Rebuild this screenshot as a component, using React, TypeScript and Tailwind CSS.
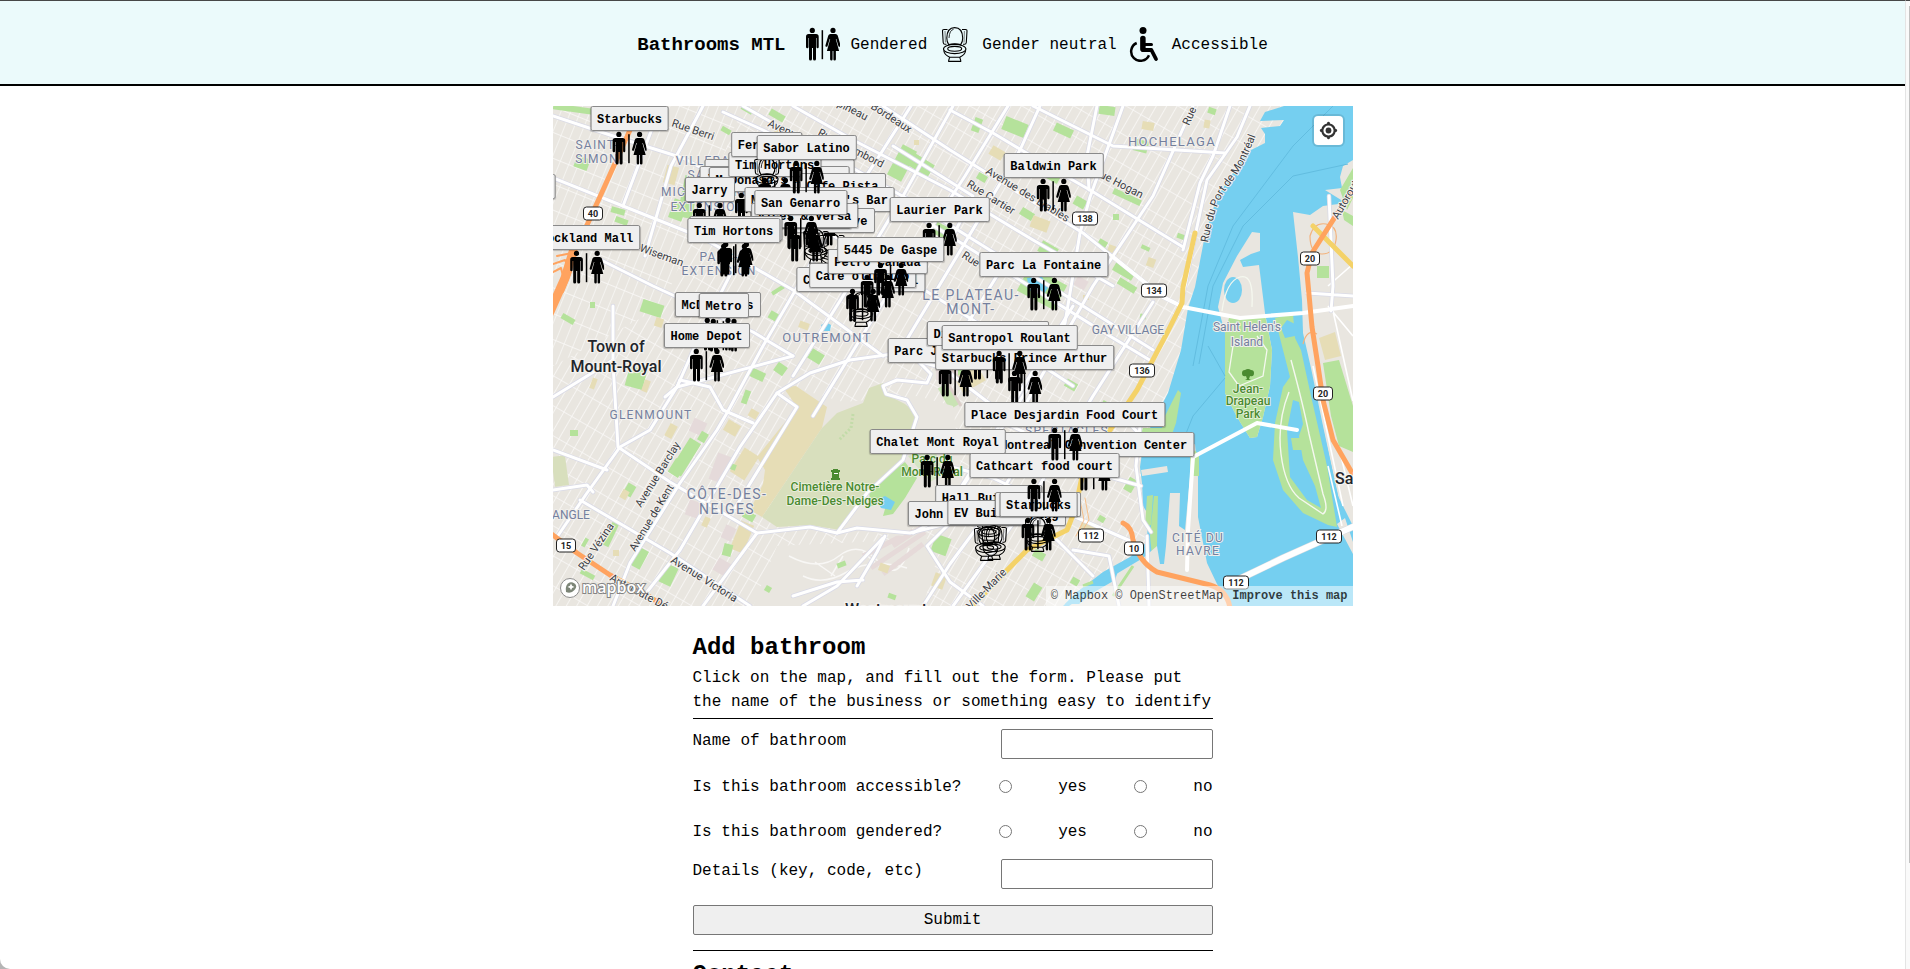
import React, { useState } from "react";

type Kind = "gendered" | "neutral";

// x is the centre of the pin, y is the top of its label
type Bathroom = { name: string; x: number; y: number; kind: Kind };

const bathrooms: Bathroom[] = [
  { name: "Starbucks", x: 77, y: 0, kind: "gendered" },
  { name: "Marche Central", x: -54, y: 68, kind: "gendered" },
  { name: "Rockland Mall", x: 34, y: 119, kind: "gendered" },
  { name: "Casa Italia Gardens", x: 227, y: 53, kind: "neutral" },
  { name: "Jean-Talon Market 1", x: 222, y: 60, kind: "neutral" },
  { name: "McDonald's", x: 199, y: 61, kind: "gendered" },
  { name: "Tim Hortons", x: 222, y: 46, kind: "gendered" },
  { name: "Ferreira", x: 214, y: 26, kind: "neutral" },
  { name: "Cafe Pista", x: 290, y: 67, kind: "gendered" },
  { name: "Miss Villeray's Bar", x: 267, y: 81, kind: "gendered" },
  { name: "Cafe Olive", x: 279, y: 102, kind: "neutral" },
  { name: "Dispatch", x: 263, y: 98, kind: "neutral" },
  { name: "Jarry", x: 157, y: 71, kind: "gendered" },
  { name: "Vices & Versa", x: 252, y: 97, kind: "gendered" },
  { name: "San Genarro", x: 248, y: 84, kind: "gendered" },
  { name: "Sabor Latino", x: 254, y: 29, kind: "gendered" },
  { name: "Tim Hortons", x: 183, y: 110, kind: "gendered" },
  { name: "Tim Hortons", x: 181, y: 112, kind: "gendered" },
  { name: "McDonald's", x: 165, y: 186, kind: "gendered" },
  { name: "Metro", x: 171, y: 187, kind: "gendered" },
  { name: "Home Depot", x: 154, y: 217, kind: "gendered" },
  { name: "Laurier Park", x: 387, y: 91, kind: "gendered" },
  { name: "Cafe Club Social", x: 308, y: 161, kind: "neutral" },
  { name: "Cafe olimpico", x: 310, y: 157, kind: "gendered" },
  { name: "Petro Canada", x: 325, y: 143, kind: "gendered" },
  { name: "5445 De Gaspe", x: 338, y: 131, kind: "gendered" },
  { name: "Baldwin Park", x: 501, y: 47, kind: "gendered" },
  { name: "Parc La Fontaine", x: 491, y: 146, kind: "gendered" },
  { name: "Parc Jeanne-Mance", x: 403, y: 232, kind: "gendered" },
  { name: "Dieu du Ciel QG", x: 435, y: 215, kind: "gendered" },
  { name: "Starbucks Prince Arthur", x: 472, y: 239, kind: "gendered" },
  { name: "Santropol Roulant", x: 457, y: 219, kind: "gendered" },
  { name: "Montreal Convention Center", x: 541, y: 326, kind: "gendered" },
  { name: "Chalet Mont Royal", x: 385, y: 323, kind: "gendered" },
  { name: "Hall Building", x: 436, y: 379, kind: "neutral" },
  { name: "John Molson Building", x: 434, y: 395, kind: "neutral" },
  { name: "EV Building", x: 441, y: 394, kind: "neutral" },
  { name: "Second Cup", x: 485, y: 386, kind: "neutral" },
  { name: "Starbucks", x: 486, y: 386, kind: "gendered" },
  { name: "Cathcart food court", x: 492, y: 347, kind: "gendered" },
  { name: "Place Desjardin Food Court", x: 512, y: 296, kind: "gendered" },
];

const GREEN = "#b5e29b";
const SAND = "#e6ddb6";
const PINK = "#e5dada";
const WATER = "#75cff0";

// x, y, width, height, rotation, fill
const patches: [number, number, number, number, number, string][] = [
  [22, 51, 14, 12, 20, GREEN],
  [0, 0, 40, 6, 8, GREEN],
  [58, 102, 14, 6, 15, GREEN],
  [62, 112, 13, 6, 20, GREEN],
  [112, 60, 12, 18, 15, SAND],
  [128, 70, 15, 42, 12, GREEN],
  [118, 94, 14, 20, 20, GREEN],
  [168, 22, 10, 5, 30, GREEN],
  [216, 6, 16, 7, 30, GREEN],
  [188, 1, 12, 5, 30, GREEN],
  [222, 22, 8, 6, 30, SAND],
  [282, 40, 16, 10, 30, GREEN],
  [341, 40, 16, 34, 28, GREEN],
  [356, 52, 24, 14, 32, GREEN],
  [361, 34, 5, 5, 0, SAND],
  [376, 118, 22, 12, 28, GREEN],
  [420, 12, 8, 14, 20, GREEN],
  [450, 14, 24, 14, 22, GREEN],
  [501, 20, 19, 9, 25, GREEN],
  [546, 0, 16, 9, 8, GREEN],
  [655, 2, 8, 6, 20, GREEN],
  [651, 14, 6, 8, 10, SAND],
  [589, 16, 12, 8, 10, SAND],
  [581, 34, 14, 12, 15, GREEN],
  [437, 42, 14, 10, 30, SAND],
  [424, 68, 10, 7, 30, GREEN],
  [493, 66, 14, 9, 30, GREEN],
  [521, 92, 12, 9, 30, GREEN],
  [559, 88, 30, 6, 25, GREEN],
  [467, 104, 14, 8, 32, GREEN],
  [478, 112, 18, 12, 20, SAND],
  [560, 108, 6, 6, 0, GREEN],
  [545, 134, 9, 7, 30, GREEN],
  [555, 140, 11, 7, 20, SAND],
  [588, 140, 9, 4, 25, GREEN],
  [594, 152, 8, 9, 20, SAND],
  [624, 128, 8, 5, 20, GREEN],
  [486, 138, 18, 12, 30, GREEN],
  [560, 160, 22, 10, 30, GREEN],
  [564, 176, 20, 7, 32, GREEN],
  [468, 168, 42, 28, 28, GREEN],
  [522, 172, 12, 10, 30, PINK],
  [587, 208, 6, 5, 10, GREEN],
  [530, 189, 6, 5, 0, SAND],
  [8, 210, 14, 6, 30, GREEN],
  [37, 196, 5, 6, 0, GREEN],
  [88, 196, 22, 13, 18, GREEN],
  [102, 212, 8, 9, 18, SAND],
  [218, 182, 14, 4, -32, GREEN],
  [216, 206, 9, 8, 30, GREEN],
  [246, 216, 10, 7, 20, SAND],
  [274, 172, 16, 8, 28, GREEN],
  [74, 262, 18, 20, 15, GREEN],
  [90, 274, 6, 12, 20, SAND],
  [38, 272, 5, 11, 20, SAND],
  [17, 324, 8, 6, 0, GREEN],
  [0, 350, 14, 30, -8, "#d8dfbd"],
  [114, 318, 8, 14, 28, SAND],
  [138, 314, 14, 14, 25, PINK],
  [146, 326, 8, 10, 30, GREEN],
  [172, 316, 14, 12, 30, SAND],
  [126, 332, 13, 38, 32, GREEN],
  [118, 354, 12, 16, 32, GREEN],
  [72, 378, 9, 12, 30, GREEN],
  [68, 384, 7, 9, 30, SAND],
  [160, 348, 14, 28, 20, PINK],
  [183, 344, 17, 28, 32, SAND],
  [177, 358, 6, 6, 20, GREEN],
  [134, 395, 13, 16, 20, PINK],
  [150, 411, 6, 10, 25, SAND],
  [190, 406, 12, 8, 30, GREEN],
  [170, 420, 11, 14, 25, PINK],
  [182, 416, 14, 30, 22, SAND],
  [170, 438, 9, 12, 15, GREEN],
  [162, 454, 14, 14, 30, PINK],
  [54, 416, 7, 25, 25, GREEN],
  [30, 432, 4, 9, 30, GREEN],
  [80, 442, 12, 20, 28, GREEN],
  [60, 444, 6, 6, 0, SAND],
  [27, 466, 15, 5, 28, GREEN],
  [109, 459, 13, 20, 25, GREEN],
  [284, 456, 9, 5, -20, GREEN],
  [212, 480, 6, 6, 30, GREEN],
  [335, 488, 8, 5, 20, GREEN],
  [196, 264, 16, 9, 25, GREEN],
  [222, 258, 11, 10, 35, GREEN],
  [190, 284, 6, 14, 20, GREEN],
  [196, 304, 9, 8, 30, SAND],
  [252, 296, 12, 6, -20, GREEN],
  [242, 306, 6, 9, 30, GREEN],
  [256, 245, 14, 11, 32, GREEN],
  [326, 458, 10, 8, 20, SAND],
  [380, 430, 16, 18, 20, GREEN],
  [380, 468, 12, 14, 20, SAND],
  [400, 262, 26, 12, 35, GREEN],
  [383, 260, 22, 14, 0, PINK],
  [390, 278, 12, 24, -30, "#c9e3b4"],
  [404, 264, 26, 18, -30, SAND],
  [512, 275, 12, 8, 30, GREEN],
  [548, 296, 10, 8, 30, GREEN],
  [540, 250, 8, 5, 20, PINK],
  [480, 445, 12, 8, 30, GREEN],
  [526, 417, 16, 14, 22, SAND],
  [545, 410, 7, 6, 30, GREEN],
  [573, 372, 9, 14, 30, GREEN],
  [476, 478, 10, 16, 32, GREEN],
  [518, 472, 8, 7, 30, GREEN],
];

const majorRoads = [
  "M60 200 L60 257 L65 341 L117 376 L204 427 L257 421 L284 427 L304 422 L357 427 L397 417",
  "M4 431 L34 387 L67 341 L97 324 L124 281 L150 222 L196 132",
  "M60 500 L77 457 L127 377 L164 324 L174 307 L210 240 L274 130 L330 44 L358 0",
  "M90 491 L127 444 L187 341 L224 287 L257 267 L297 254 L340 248 L390 262 L440 300",
  "M150 500 L204 427",
  "M182 402 L244 301 L224 287",
  "M27 394 L117 447 L197 500",
  "M0 384 L34 379 L40 386",
  "M0 344 L54 364",
  "M0 291 L60 254",
  "M127 274 L157 281 L170 304 L200 317",
  "M112 291 L124 281 L127 274",
  "M124 281 L240 250",
  "M284 427 L314 387 L350 354 L364 311 L354 294 L333 288 L330 280 L344 274 L374 277 L378 268 L367 257",
  "M0 10 L60 30 L130 52 L190 84 L300 140 L420 214 L520 280",
  "M0 72 L70 100 L150 132 L240 184 L330 250",
  "M48 154 L100 180 L200 226 L240 250",
  "M170 6 L210 24 L300 70 L397 130 L470 176 L560 232 L600 256",
  "M100 20 L70 100 M150 0 L118 60 L92 150",
  "M190 0 L260 40 L360 96 L440 146 L530 200 L600 244",
  "M240 0 L300 34 L397 84 L480 134 L560 180",
  "M330 0 L397 44 L530 127 L610 191 L630 201",
  "M397 4 L440 27 L497 61 L537 84 L630 141",
  "M480 0 L560 40 L672 47",
  "M697 0 L684 31 L654 74 L644 121 L630 190",
  "M677 0 L660 50 L647 77 L630 144",
  "M570 0 L537 91 L527 127 L512 217 L470 290 L410 380",
  "M544 0 L534 50 L536 84",
  "M640 0 L600 90 L540 180 L500 250 L460 320",
  "M487 0 L467 44 L410 140 L350 240",
  "M455 0 L412 70 L330 196 L260 310",
  "M400 0 L350 90 L290 190 L240 270",
  "M450 160 L397 246 M600 196 L540 290 L480 390 L400 500",
  "M395 360 L440 372 L520 410 L589 440",
  "M417 300 L500 340 L560 372 L588 380",
  "M360 427 L390 410 L440 330 L520 200",
  "M370 500 L397 458 L440 400 L500 300",
  "M397 417 L374 440 L397 476 L430 500",
  "M250 500 L284 480 L330 432",
  "M304 480 L324 446 L332 430 M240 490 L284 476 L310 474",
  "M520 444 L556 450 L566 500 M594 430 L596 500 M500 430 L540 470",
  "M587 320 L583 360 L590 414 L598 426",
  "M560 300 L588 330",
  "M340 40 L420 90 L400 130",
  "M754 187 L800 190 M776 90 L780 180 L778 205",
];

const bridges = [
  "M560 151 L610 191 L630 201 L687 212 L750 207 L800 200",
  "M634 464 L635 424 L640 351 L704 317 L744 324",
];

const orangeRoads = [
  "M84 0 L77 24 L50 84 L35 117 L22 144 L10 174 L-4 206",
  "M-4 426 L24 447 L57 469 L97 491 L114 502",
  "M800 84 L780 114 L759 147 L754 167 L759 221 L765 260 L770 294 L780 334 L802 372",
  "M570 417 Q579 421 580 434 Q586 456 604 466 L657 479 Q674 484 677 502",
];

const yellowRoads = [
  "M642 127 L630 181 L629 197 L614 227 L584 284 L557 324 L530 366 L522 404 L514 424 L494 434 L474 444 L417 502",
  "M760 120 L800 160",
];

const shields: [string, number, number][] = [
  ["40", 40, 107],
  ["138", 532, 112],
  ["134", 601, 184],
  ["20", 757, 152],
  ["136", 589, 264],
  ["20", 770, 287],
  ["112", 538, 429],
  ["10", 581, 442],
  ["112", 776, 430],
  ["112", 683, 476],
  ["15", 13, 439],
];

// text, x, y, rotation
const streets: [string, number, number, number][] = [
  ["Rue Berri", 118, 20, 19],
  ["Avenue", 214, 20, 24],
  ["Rue Chambord", 264, 29, 27],
  ["Papineau", 272, -6, 27],
  ["Bordeaux", 317, 2, 33],
  ["Wiseman", 86, 145, 20],
  ["Rue Hogan", 540, 68, 27],
  ["Avenue des Érables", 432, 67, 31],
  ["Rue Cartier", 413, 80, 32],
  ["Rue", 408, 151, 33],
  ["Rue", 636, 20, -66],
  ["Autoroute", 785, 114, -60],
  ["Avenue Barclay", 88, 402, -58],
  ["Avenue de Kent", 82, 446, -59],
  ["Avenue Victoria", 117, 456, 32],
  ["Rue Vézina", 31, 465, -56],
  ["Autoroute Dé", 56, 474, 28],
  ["Ville-Marie", 418, 504, -46],
];

function GenderedIcon() {
  return (
    <svg width="35" height="35" viewBox="0 0 35 35" className="shrink-0" aria-hidden="true">
      <circle cx="7.3" cy="3.4" r="2.6" />
      <path d="M3.6 7H11q2.7 0 2.7 2.7V20q0 1.3-1.1 1.3T11.5 20v-9H11v21q0 1.5-1.5 1.5T8 32V21H7v11q0 1.5-1.5 1.5T4 32V11h-.5v9q0 1.3-1.2 1.3T1 20V9.7Q1 7 3.6 7z" />
      <rect x="16.6" y="3.2" width="1.5" height="29" />
      <circle cx="28" cy="3.4" r="2.6" />
      <path d="M25.5 7h5q1.8 0 2.3 1.7l2.7 9.6q.3 1.2-.7 1.5t-1.4-.8L31.3 12h-.5l3.3 12h-3.2v8.2q0 1.3-1.3 1.3t-1.2-1.3V24h-.8v8.2q0 1.3-1.2 1.3t-1.3-1.3V24h-3.2l3.3-12h-.5L22.6 19q-.4 1.1-1.4.8t-.7-1.5l2.7-9.6Q23.7 7 25.5 7z" />
    </svg>
  );
}

function ToiletIcon() {
  return (
    <svg
      width="35"
      height="35"
      viewBox="0 0 35 35"
      fill="none"
      stroke="black"
      strokeWidth="1.1"
      className="shrink-0"
      aria-hidden="true"
    >
      <path d="M10.5 2.5H7Q5.4 2.5 5.5 4l.7 11.5q.2 1.8 1.8 1.8h1.5M25 2.5h3.5q1.6 0 1.5 1.5l-.7 11.5q-.2 1.8-1.8 1.8H26" />
      <path d="M8 4l.4 11.5M27.4 4L27 15.5" strokeWidth="0.5" />
      <path d="M9.8 11Q10 .6 17.7.6T25.7 11q0 4-2 6.6Q17.7 16 11.7 17.6 9.8 15 9.8 11z" />
      <path d="M12 11Q12.5 3 16.5 2.4" strokeWidth="0.8" />
      <ellipse cx="17.7" cy="22" rx="11.2" ry="4.6" />
      <ellipse cx="17.7" cy="21.8" rx="7" ry="2.4" />
      <path d="M6.7 23.5q.8 4.5 6 6.7h10q5.2-2.200 6-6.7" />
      <path d="M12.7 30.2l-1 3.2v1h12v-1l-1-3.200" />
    </svg>
  );
}

function AccessibleIcon() {
  return (
    <svg
      width="35"
      height="35"
      viewBox="0 0 35 35"
      fill="none"
      stroke="black"
      strokeLinecap="round"
      strokeLinejoin="round"
      className="shrink-0"
      aria-hidden="true"
    >
      <circle cx="16" cy="3.5" r="3.5" fill="black" stroke="none" />
      <path d="M15.9 11.500V22" strokeWidth="5.5" />
      <path d="M16 17.5H24.500" strokeWidth="3" />
      <path d="M15.700 23H24.400L29 32" strokeWidth="3.8" />
      <path d="M9.7 16A9.3 9.3 0 1 0 22 28.2" strokeWidth="2.5" strokeLinecap="butt" />
    </svg>
  );
}

function MapCanvas() {
  return (
    <svg
      viewBox="0 0 800 500"
      preserveAspectRatio="xMidYMid slice"
      className="block h-full w-full font-[Roboto,sans-serif]"
      aria-hidden="true"
    >
      <defs>
        <pattern id="grid" width="26" height="9" patternUnits="userSpaceOnUse" patternTransform="rotate(-60)">
          <path d="M0 0H26M0 0V9" stroke="#fbfaf9" strokeWidth="1.4" fill="none" />
        </pattern>
        <pattern id="gridWest" width="9" height="24" patternUnits="userSpaceOnUse" patternTransform="rotate(22)">
          <path d="M0 0H9M0 0V24" stroke="#fbfaf9" strokeWidth="1.3" fill="none" />
        </pattern>
        <path id="portRoad" d="M655 137 Q662 95 676 80 Q692 60 704 26" />
      </defs>

      <rect width="800" height="500" fill="#e9e6e0" />
      <rect width="800" height="500" fill="url(#grid)" />
      <path d="M0 0H190L110 200L0 260z" fill="#e9e6e0" />
      <path d="M0 0H190L110 200L0 260z" fill="url(#gridWest)" />
      <path d="M224 440L390 432L370 500H200z" fill="#e9e6e0" />
      <path
        d="M236 450q30 16 50 0t40 6 30-14M250 470q20 10 44-4t60-4M262 456l20 14M290 450l-12 20M310 446l16 14"
        stroke="#f8f7f5"
        strokeWidth="1.5"
        fill="none"
      />
      <path d="M310 450l50-26M318 462l54-36M330 468l40-30M340 440l30-20" stroke="#e6dad9" strokeWidth="5" fill="none" />

      {patches.map(([x, y, w, h, r, fill], i) => (
        <rect
          key={i}
          x={x}
          y={y}
          width={w}
          height={h}
          fill={fill}
          transform={`rotate(${r} ${x + w / 2} ${y + h / 2})`}
        />
      ))}

      {/* the mountain */}
      <path d="M230 281L250 284L290 296L364 290L400 300L410 380L350 430L290 424L269 330z" fill="#e9e6e0" />
      <path d="M230 281L243 280L274 301L269 322L209 411L197 404L210 378L212 364L204 351L244 301z" fill={SAND} />
      <path
        d="M310 297L316 282L330 277L336 290L352 298L362 307L361 322L350 354L327 374L310 391L287 424L257 419L224 421L209 411L269 322L284 307z"
        fill="#d8dfbd"
      />
      <path d="M316 386L338 366L352 356L364 372L352 392L340 408L330 410L334 396L318 400z" fill={GREEN} />
      <path d="M355 350l26-8 10 26-14 8z" fill="#d5e6c4" />
      <path d="M324 394l8-4 10 6-4 8-10-2z" fill={WATER} />
      <path d="M268 219l5-3 5 3-1 6-7 0z" fill={WATER} />
      <path d="M300 308l-2 14-12 12" stroke="#c2dba8" strokeWidth="3" strokeDasharray="2 2" fill="none" />
      <path d="M388 266l20 34M396 262l10 10" stroke="#dccfca" strokeWidth="3" fill="none" />
      <path d="M474 172l14-2 8 10-6 10-14-6z" fill={WATER} />

      {/* the river */}
      <path
        d="M731 0L712 6L707 15L731 14L727 20L708 22L712 28V37L694 46L664 91L652 129L642 181L635 202L628 244L615 287L597 322L590 340L587 361L589 377L590 400L595 408L594 436L577 451L550 466L524 486L510 500H800V0z"
        fill={WATER}
      />
      <path d="M617 300l8-16 3 3-5 30-5 14-9-1v-14z" fill={GREEN} />
      <path d="M590 322h28l-2 6h-28z" fill={GREEN} />
      <path d="M588 364l26-4 1 6-26 4z" fill="#e9e6e0" />
      <path d="M594 390l6-1-2 30-6 2zM601 390h4l-1 50-5 10-2-20z" fill={GREEN} />
      <path
        d="M617 387H627L626 420L632 424L637 371V340L642 338L645 371V411L654 457L664 478L678 500H516L560 470L590 452L604 440L607 458L611 458L613 440z"
        fill="#e9e6e0"
      />
      <path d="M637 352l5-8 4 6v20h-8z" fill={GREEN} />
      <path d="M524 486l16-10 26-14-4 12-24 14-12 10h-14z" fill={WATER} />
      <path d="M540 476l-10 4M560 490l20-30" stroke={GREEN} strokeWidth="3" />

      {/* Saint Helen's island */}
      <path
        d="M699 126L707 127V145L698 148L687 154L690 161L706 159L712 207L719 244L717 280L710 311L704 331L697 332L684 311L672 287V227L665 201L670 177L684 150z"
        fill="#e9e6e0"
      />
      <path d="M676 212L712 209L719 244L717 280L710 311L704 331L697 332L684 311L672 287V227z" fill={GREEN} />
      <ellipse cx="680" cy="184" rx="9" ry="13" fill={WATER} />
      <path d="M669 205q4-30 18-34t12 30M680 240l-4 26 10 14 24-10 4-26-10-14" stroke="#f5f8ef" strokeWidth="1.3" fill="none" />

      {/* Notre-Dame island */}
      <path
        d="M722 212L740 208L742 232L748 244L758 290L774 360L784 421L775 419L750 407L730 384L720 354L722 317L730 281L737 271L730 244z"
        fill={GREEN}
      />
      <path
        d="M740 294L734 324L737 371L754 394L768 402L762 380L750 354L746 330L750 318L746 296zM728 222l6-8 8 4v12l-10 2z"
        fill={WATER}
      />
      <path d="M738 332h12v12h-10z" fill={GREEN} />
      <path
        d="M736 286q-12 30-8 62t18 44l24 16q6-4 0-20l-14-60q-6-30-18-74"
        stroke="#f5f8ef"
        strokeWidth="1.4"
        fill="none"
      />

      {/* south shore */}
      <path
        d="M800 54L790 60L787 71L789 82L772 84L793 97L770 100L757 109L740 106L745 151L749 194L750 227L758 262L770 320L785 390L800 420z"
        fill="#e9e6e0"
      />
      <path d="M742 208l6-2 2 28 42 186-5-2z" fill={WATER} />
      <path d="M770 257L786 254L800 300V346L786 340L778 310z" fill={GREEN} />
      <path d="M787 84l13-22v30l-6 12zM764 160h12v12h-12zM789 104l11 6v10l-9-6z" fill={GREEN} />
      <path d="M766 232l16-6 6 24-16 4z" fill={SAND} />
      <path d="M784 418l8-6 8 24v12z" fill="#e9e6e0" />
      <path
        d="M775 360l14 60M760 260l30 140M788 350l12 50M775 180l25-22M775 200l25 30M780 205l20 90"
        stroke="#fff"
        strokeWidth="1.6"
        fill="none"
      />
      <path
        d="M757 130q4-14 16-12t10 16-14 14-12-18zM750 238q4-16 14-10"
        stroke="#f3b27c"
        strokeWidth="1.2"
        fill="none"
      />
      <path
        d="M780 0L740 40L680 120L655 180L640 260M795 58L740 70L690 120L660 180L646 258M672 272L640 310L632 330M672 270L655 240"
        stroke="#62bde0"
        strokeWidth="1"
        fill="none"
      />

      <g fill="none" strokeLinejoin="round" strokeLinecap="round">
        {majorRoads.map((d, i) => (
          <path key={i} d={d} stroke="#d9dae6" strokeWidth="4.5" />
        ))}
        {majorRoads.map((d, i) => (
          <path key={i} d={d} stroke="#fff" strokeWidth="3" />
        ))}
        {bridges.map((d, i) => (
          <path key={i} d={d} stroke="#fff" strokeWidth="4" />
        ))}
        <path d="M804 419L730 452L676 478" stroke="#d8dbe0" strokeWidth="7" />
        <path d="M804 419L730 452L676 478" stroke="#fff" strokeWidth="6" />
        {yellowRoads.map((d, i) => (
          <path key={i} d={d} stroke="#f4d268" strokeWidth="5" />
        ))}
        {orangeRoads.map((d, i) => (
          <path key={i} d={d} stroke="#ffa35f" strokeWidth="5" />
        ))}
        <path d="M20 146L12 172L-4 208" stroke="#ffa35f" strokeWidth="9" />
        <path d="M0 158l12-4 6 12-8 20M0 166l8-4 4 16M4 150l20-4" stroke="#ffa35f" strokeWidth="2" />
        <path d="M527 394l4 20-8 16M532 392l4 22-10 16" stroke="#f6c08c" strokeWidth="1" />
      </g>

      <g fill="#74809e" textAnchor="middle" stroke="#f1efeb" strokeWidth="2" paintOrder="stroke">
        <g className="text-[12px] tracking-widest">
          <text x="44" y="43">SAINT-</text>
          <text x="44" y="57">SIMON</text>
          <text x="156" y="59">VILLERAY-</text>
          <text x="156" y="73">SAINT-</text>
          <text x="155" y="90">MICHEL-PARC-</text>
          <text x="155" y="105">EXTENSION</text>
          <text x="166" y="155">PARC-</text>
          <text x="166" y="169">EXTENSION</text>
          <text x="514" y="329">SPECTACLES</text>
          <text x="645" y="436">CITÉ DU</text>
          <text x="645" y="449">HAVRE</text>
          <text x="98" y="313">GLENMOUNT</text>
        </g>
        <g className="text-[13px] tracking-widest">
          <text x="274" y="236">OUTREMONT</text>
          <text x="619" y="40">HOCHELAGA</text>
        </g>
        <g className="text-[14px] tracking-widest">
          <text x="418" y="194">LE PLATEAU-</text>
          <text x="418" y="208">MONT-</text>
          <text x="174" y="393">CÔTE-DES-</text>
          <text x="174" y="408">NEIGES</text>
        </g>
        <g className="text-[12px]">
          <text x="575" y="228">GAY VILLAGE</text>
          <text x="694" y="225">Saint Helen's</text>
          <text x="694" y="240">Island</text>
          <text x="18" y="413">ANGLE</text>
        </g>
      </g>

      <g className="text-[12px] font-medium" fill="#4a8a30" textAnchor="middle" stroke="#eef3e3" strokeWidth="1.5" paintOrder="stroke">
        <text x="282" y="385">Cimetière Notre-</text>
        <text x="282" y="399">Dame-Des-Neiges</text>
        <text x="379" y="357">Parc du</text>
        <text x="379" y="370">Mont-Royal</text>
        <text x="695" y="287">Jean-</text>
        <text x="695" y="299">Drapeau</text>
        <text x="695" y="312">Park</text>
      </g>
      <path d="M279 366h-1v-2h2v-1h5v1h2v2h-1v6h1v2h-9v-2h1z" fill="#4a8a30" />
      <path d="M281 367h4v1h-4z" fill="#fff" />
      <path d="M689 267q0-3 3-3 3-2 6 0 3 0 3 3 0 4-4 3l-1 3 2 1h-6l2-1-1-3q-4 1-4-3z" fill="#4a8a30" />

      <g className="text-[16px] font-medium" fill="#22252b" stroke="#f4f2ef" strokeWidth="2.5" paintOrder="stroke">
        <text x="63" y="246" textAnchor="middle">Town of</text>
        <text x="63" y="266" textAnchor="middle">Mount-Royal</text>
        <text x="782" y="378">Saint-Lambert</text>
        <text x="292" y="509">Westmount</text>
      </g>

      <g className="text-[11px]" fill="#3b3d44" stroke="#f4f2ef" strokeWidth="2" paintOrder="stroke">
        {streets.map(([name, x, y, r]) => (
          <text key={`${name}-${x}`} x={x} y={y} transform={`rotate(${r} ${x} ${y})`}>
            {name}
          </text>
        ))}
        <text>
          <textPath href="#portRoad">Rue du Port de Montréal</textPath>
        </text>
      </g>

      {shields.map(([num, x, y]) => {
        const w = num.length === 3 ? 25 : 19;
        return (
          <g key={`${num}-${x}`}>
            <rect x={x - w / 2} y={y - 6} width={w} height="13" rx="3" fill="#fff" stroke="#222" />
            <text x={x} y={y + 4} textAnchor="middle" className="text-[9px] font-bold" fill="#222">
              {num}
            </text>
          </g>
        );
      })}
    </svg>
  );
}

function MapMarker({ bathroom }: { bathroom: Bathroom }) {
  return (
    <div
      className="absolute flex -translate-x-1/2 flex-col items-center"
      style={{ left: bathroom.x, top: bathroom.y }}
    >
      <button
        type="button"
        className="h-[25px] rounded-[2px] border border-[#8a8a8a] bg-[#efefef] px-[6px] pt-[2px] text-[12px] leading-[20px] font-bold whitespace-nowrap shadow-[0_1px_1px_rgba(0,0,0,0.2)]"
      >
        {bathroom.name}
      </button>
      {bathroom.kind === "gendered" ? <GenderedIcon /> : <ToiletIcon />}
    </div>
  );
}

function BathroomMap() {
  return (
    <section aria-label="Map of bathrooms" className="relative h-[500px] w-full max-w-[800px] overflow-hidden">
      <MapCanvas />
      {bathrooms.map((b, i) => (
        <MapMarker key={i} bathroom={b} />
      ))}

      <button
        type="button"
        aria-label="Find my location"
        className="absolute top-[10px] right-[10px] h-[29px] w-[29px] rounded bg-white shadow-[0_0_0_2px_rgba(0,0,0,0.1)]"
      >
        <svg width="29" height="29" viewBox="0 0 20 20" fill="#333">
          <path d="M10 4C9 4 9 5 9 5v.1A5 5 0 0 0 5.1 9H5s-1 0-1 1 1 1 1 1h.1A5 5 0 0 0 9 14.9v.1s0 1 1 1 1-1 1-1v-.1a5 5 0 0 0 3.9-3.9h.1s1 0 1-1-1-1-1-1h-.1A5 5 0 0 0 11 5.1V5s0-1-1-1zm0 2.5a3.5 3.5 0 1 1 0 7 3.5 3.5 0 1 1 0-7z" />
          <circle cx="10" cy="10" r="2" />
        </svg>
      </button>

      <a href="#mapbox" aria-label="Mapbox homepage" className="absolute bottom-[6px] left-[6px]">
        <svg width="90" height="24" viewBox="0 0 90 24">
          <circle cx="11" cy="12" r="9.5" fill="#fff" stroke="#8d8d8d" />
          <path d="M7 16q-1-6 2-8.5t6.5 0 0 6.5T7 16z" fill="#7c8577" />
          <path d="M12 7.5l1.1 2.3 2.3 1.1-2.3 1.1-1.1 2.3-1.1-2.3-2.3-1.1 2.3-1.1z" fill="#fff" />
          <text
            x="23"
            y="17"
            className="font-['Open_Sans',sans-serif] text-[16px] font-semibold"
            fill="#fff"
            stroke="#858585"
            strokeWidth="2"
            paintOrder="stroke"
          >
            mapbox
          </text>
        </svg>
      </a>

      <div className="absolute right-0 bottom-0 flex gap-[7px] bg-white/50 px-[5px] text-[12px] leading-[20px] text-black/75">
        <a href="#mapbox-about">© Mapbox</a>
        <a href="#openstreetmap">© OpenStreetMap</a>
        <a href="#improve" className="ml-[2px] font-bold">
          Improve this map
        </a>
      </div>
    </section>
  );
}

type YesNoProps = { name: string; question: string };

function YesNoRow({ name, question }: YesNoProps) {
  const [value, setValue] = useState<string>("");

  return (
    <div role="radiogroup" aria-label={question} className="flex h-[45px] items-center justify-between">
      <span>{question}</span>
      <div className="flex w-[214px] items-center justify-between">
        {["yes", "no"].map((option) => (
          <React.Fragment key={option}>
            <input
              type="radio"
              id={`${name}-${option}`}
              name={name}
              value={option}
              checked={value === option}
              onChange={() => setValue(option)}
              className="h-[13px] w-[13px]"
            />
            <label htmlFor={`${name}-${option}`}>{option}</label>
          </React.Fragment>
        ))}
      </div>
    </div>
  );
}

function TextRow({ id, label }: { id: string; label: string }) {
  return (
    <div className="flex items-start justify-between">
      <label htmlFor={id}>{label}</label>
      <input
        id={id}
        type="text"
        className="h-[30px] w-[212px] rounded-[2px] border border-[#767676] bg-white px-1"
      />
    </div>
  );
}

function AddBathroomForm() {
  return (
    <form onSubmit={(e) => e.preventDefault()} className="border-b border-black pb-[15px]">
      <h2 className="text-[24px] leading-[36px] font-bold">Add bathroom</h2>
      <p className="mb-[10px] border-b border-black pb-1">
        Click on the map, and fill out the form. Please put the name of the business or something easy to identify
      </p>
      <TextRow id="name" label="Name of bathroom" />
      <div className="py-[5px]">
        <YesNoRow name="accessible" question="Is this bathroom accessible?" />
        <YesNoRow name="gendered" question="Is this bathroom gendered?" />
      </div>
      <TextRow id="details" label="Details (key, code, etc)" />
      <button
        type="submit"
        className="mt-4 h-[30px] w-full rounded-[2px] border border-[#767676] bg-[#efefef]"
      >
        Submit
      </button>
    </form>
  );
}

const App: React.FC = () => {
  return (
    <div className="flex h-screen overflow-hidden bg-[#b5b5b5] font-['Liberation_Mono',monospace] text-[16px] leading-[24px] text-black">
      <div className="min-w-0 flex-1 overflow-hidden rounded-bl-[10px] bg-white">
        <header className="flex h-[86px] items-center justify-center gap-[10px] border-t border-b-2 border-t-[#474747] border-b-black bg-[#ebfafb] pt-1">
          <h1 className="mr-[10px] text-[19px] font-bold">Bathrooms MTL</h1>
          <GenderedIcon />
          <span>Gendered</span>
          <ToiletIcon />
          <span>Gender neutral</span>
          <AccessibleIcon />
          <span>Accessible</span>
        </header>

        <main className="flex flex-col items-center gap-6 pt-5">
          <BathroomMap />
          <div className="w-full max-w-[520px]">
            <AddBathroomForm />
            <h2 className="pt-[6px] text-[24px] leading-[36px] font-bold">Contact</h2>
          </div>
        </main>
      </div>

      {/* scroll track */}
      <div className="w-[5px] border-t border-l border-t-[#474747] border-l-[#e4e4e4] bg-[#fafafa] pt-[5px]">
        <div className="ml-auto h-[89%] w-px bg-[#c1c1c1]" />
      </div>
    </div>
  );
};

export default App;
